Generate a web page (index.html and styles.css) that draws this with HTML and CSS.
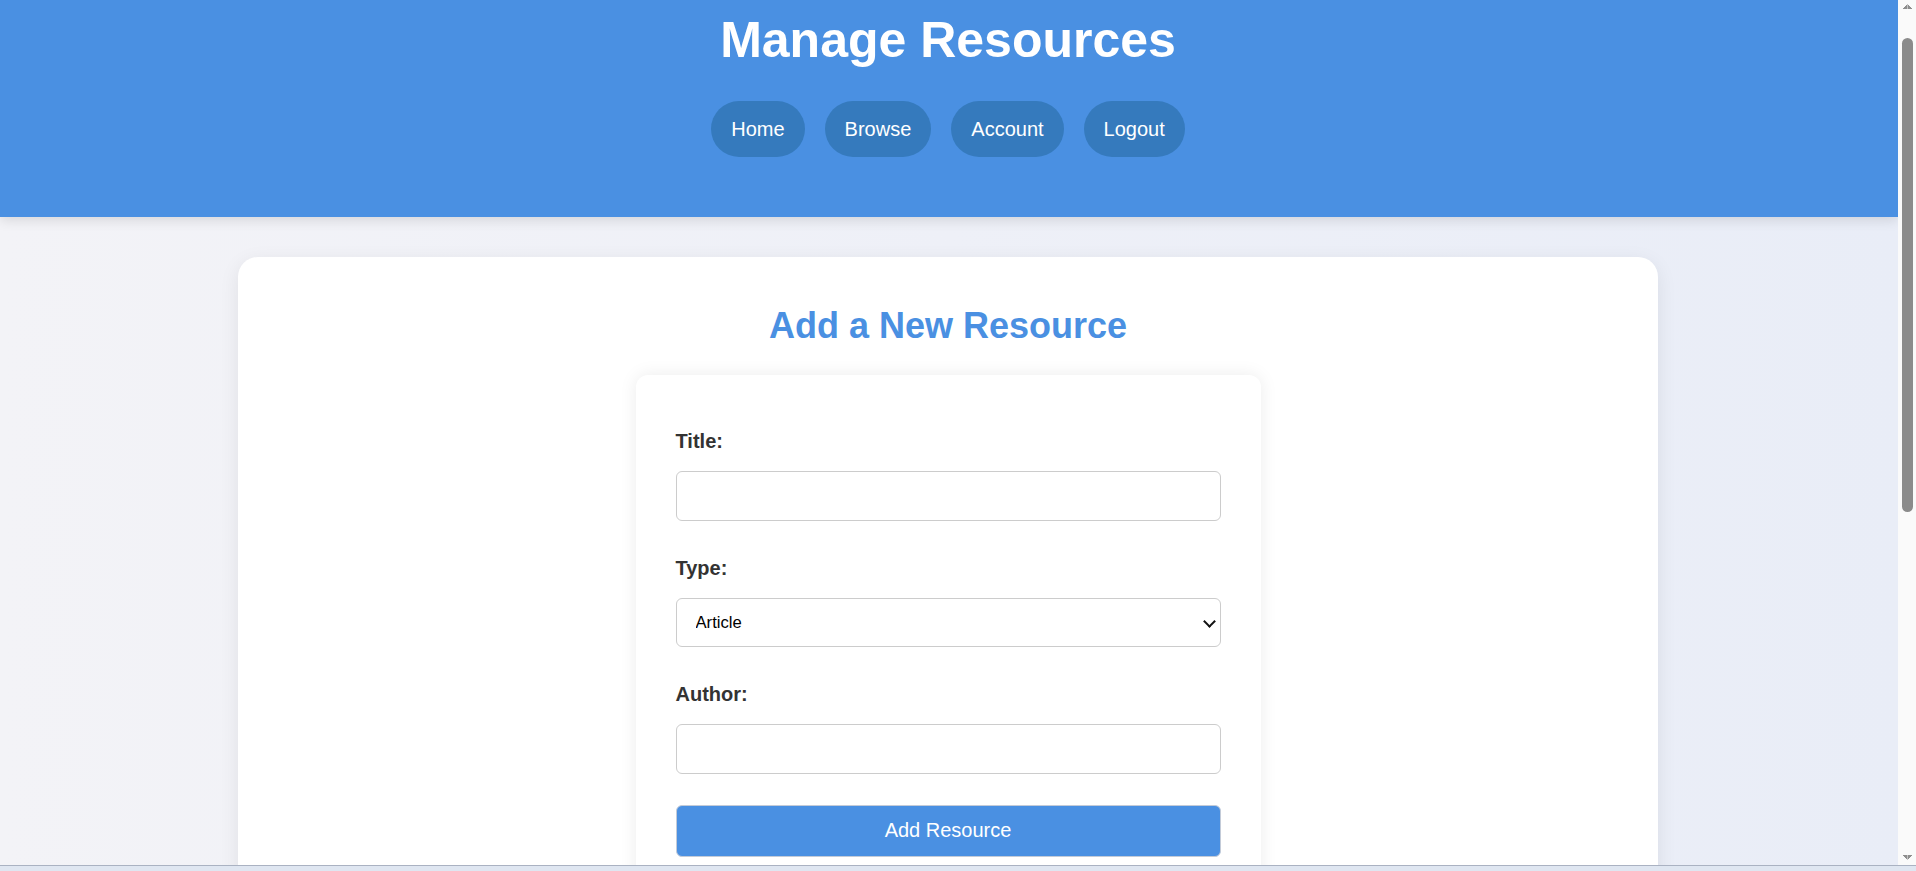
FILE: index.html
```html
<!DOCTYPE html>
<html lang="en">
<head>
<meta charset="utf-8">
<title>Manage Resources</title>
<link rel="stylesheet" href="styles.css">
</head>
<body>
<div class="screen">
  <div class="viewport">
    <header class="site-header">
      <h1 class="site-title">Manage Resources</h1>
      <nav class="nav">
        <a class="nav-link" href="#">Home</a>
        <a class="nav-link" href="#">Browse</a>
        <a class="nav-link" href="#">Account</a>
        <a class="nav-link" href="#">Logout</a>
      </nav>
    </header>
    <main class="main">
      <section class="card">
        <h2 class="card-title">Add a New Resource</h2>
        <form class="resource-form">
          <div class="field">
            <label class="field-label" for="title">Title:</label>
            <input class="field-input" id="title" type="text">
          </div>
          <div class="field">
            <label class="field-label" for="type">Type:</label>
            <div class="select-wrap">
              <select class="field-input field-select" id="type">
                <option>Article</option>
                <option>Video</option>
                <option>Book</option>
                <option>Course</option>
              </select>
            </div>
          </div>
          <div class="field field-last">
            <label class="field-label" for="author">Author:</label>
            <input class="field-input" id="author" type="text">
          </div>
          <button class="submit-btn" type="submit">Add Resource</button>
        </form>
      </section>
    </main>
  </div>
  <div class="scrollbar" aria-hidden="true">
    <div class="sb-btn sb-up"></div>
    <div class="sb-track"><div class="sb-thumb"></div></div>
    <div class="sb-btn sb-down"></div>
  </div>
</div>
<div class="taskbar"></div>
</body>
</html>
```
FILE: styles.css
```css
* {
  box-sizing: border-box;
}

html,
body {
  margin: 0;
  height: 100%;
  overflow: hidden;
}

body {
  display: flex;
  flex-direction: column;
  font-family: "Liberation Sans", Arial, sans-serif;
  background: #dfe6f1;
}

.screen {
  flex: none;
  height: 865px;
  display: flex;
}

.viewport {
  flex: 1;
  min-width: 0;
  overflow: hidden;
  background: linear-gradient(to right, #f3f3f7, #e9edf7);
}

/* Drawn scrollbar */
.scrollbar {
  flex: none;
  width: 18px;
  display: flex;
  flex-direction: column;
  background: #fafafa;
}

.sb-btn {
  flex: none;
  height: 17px;
  background-repeat: no-repeat;
  background-size: 4.5px 5px, 4.5px 5px;
}

.sb-up {
  background-image:
    linear-gradient(to top left, #8e8e8e 50%, transparent 50%),
    linear-gradient(to top right, #8e8e8e 50%, transparent 50%);
  background-position: 5px 4px, 9.5px 4px;
}

.sb-down {
  background-image:
    linear-gradient(to bottom left, #8e8e8e 50%, transparent 50%),
    linear-gradient(to bottom right, #8e8e8e 50%, transparent 50%);
  background-position: 5px 7px, 9.5px 7px;
}

.sb-track {
  flex: 1;
  padding-top: 21px;
}

.sb-thumb {
  height: 474px;
  margin: 0 3px 0 4px;
  background: #8b8b8b;
  border-radius: 6px;
}

.taskbar {
  flex: 1;
  border-top: 1px solid #aab2c2;
  background: #dfe6f1;
}

/* Header */
.site-header {
  position: relative;
  z-index: 1;
  background: #4a90e2;
  color: #fff;
  text-align: center;
  padding: 11px 22px 60px 20px;
  box-shadow: 0 3px 12px rgba(0, 0, 0, 0.12);
}

.site-title {
  margin: 0;
  font-size: 50px;
  line-height: 58px;
  font-weight: bold;
}

.nav {
  display: flex;
  justify-content: center;
  gap: 20px;
  margin-top: 32px;
}

.nav-link {
  color: #fff;
  text-decoration: none;
  background: #357abd;
  font-size: 20px;
  line-height: 24px;
  padding: 16px 20px;
  border-radius: 30px;
}

/* Main card */
.main {
  padding: 40px 2px 40px 0;
}

.card {
  max-width: 1420px;
  min-height: 1213px;
  margin: 0 auto;
  background: #fff;
  border-radius: 20px;
  padding: 48px 40px;
  box-shadow: 0 5px 20px rgba(0, 0, 0, 0.08);
}

.card-title {
  margin: 0 0 29px;
  text-align: center;
  color: #4a90e2;
  font-size: 36px;
  line-height: 41px;
  font-weight: bold;
}

.resource-form {
  width: 625px;
  margin: 0 auto;
  background: #fff;
  border-radius: 12px;
  padding: 55px 40px 40px;
  box-shadow: 0 0 18px rgba(0, 0, 0, 0.08);
}

.field {
  margin-bottom: 36px;
}

.field-last {
  margin-bottom: 31px;
}

.field-label {
  display: block;
  font-size: 20px;
  line-height: 23px;
  font-weight: bold;
  color: #333;
  margin-bottom: 18px;
}

.field-input {
  display: block;
  width: 100%;
  height: 49.5px;
  border: 1px solid #ccc;
  border-radius: 6px;
  background: #fff;
  font-family: "Liberation Sans", Arial, sans-serif;
  font-size: 16.67px;
  color: #000;
  padding: 0 19px;
  margin: 0;
}

.select-wrap {
  position: relative;
}

.field-select {
  appearance: none;
  -webkit-appearance: none;
  padding: 0 19px;
}

.select-wrap::after {
  content: "";
  position: absolute;
  right: 7px;
  top: 50%;
  width: 7px;
  height: 7px;
  margin-top: -5px;
  border-right: 2.5px solid #111;
  border-bottom: 2.5px solid #111;
  transform: rotate(45deg);
  pointer-events: none;
}

.submit-btn {
  display: block;
  width: 100%;
  height: 52px;
  margin: 0;
  background: #4a90e2;
  color: #fff;
  border: 1px solid #c3cbd8;
  border-radius: 6px;
  font-family: "Liberation Sans", Arial, sans-serif;
  font-size: 20px;
  cursor: pointer;
}
```
